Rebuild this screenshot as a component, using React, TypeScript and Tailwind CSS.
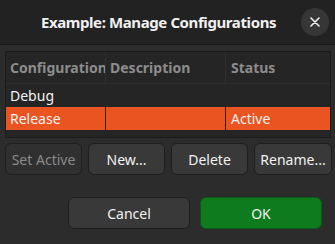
const rows = [
  { name: "Debug", desc: "", status: "", active: false },
  { name: "Release", desc: "", status: "Active", active: true },
];

const font = { fontFamily: '"Noto Sans", "DejaVu Sans", sans-serif' };

export default function App() {
  return (
    <div className="h-[244px] w-[335px] overflow-hidden bg-[#2c2c2c] text-[14px] text-[#f2f2f2]" style={font}>
      {/* Title bar */}
      <div className="relative flex h-[45px] items-center justify-center border-b border-[#1a1a1a] bg-[#222222] pr-[18px]">
        <span className="text-[15px] font-bold tracking-[-0.4px] text-[#f0f0f0]">Example: Manage Configurations</span>
        <div className="absolute right-[6px] top-[8px] flex h-[28px] w-[28px] items-center justify-center rounded-full bg-[#363636]">
          <svg width="10" height="10" viewBox="0 0 10 10">
            <path d="M1 1 L9 9 M9 1 L1 9" stroke="#f0f0f0" strokeWidth="1.6" strokeLinecap="round" />
          </svg>
        </div>
      </div>

      {/* Table */}
      <div className="ml-[5px] mt-[6px] h-[87px] w-[326px] border border-[#1b1b1b] bg-[#252525]">
        <div className="flex h-[32px] items-center border-b border-[#2e2e2e] font-bold text-[#8c8c8c]">
          <div className="w-[100px] overflow-hidden whitespace-nowrap border-r border-[#2f2f2f] pl-[4px] leading-[32px]">Configuration</div>
          <div className="w-[120px] border-r border-[#2f2f2f] pl-[4px] leading-[32px]">Description</div>
          <div className="flex-1 pl-[5px] leading-[32px]">Status</div>
        </div>
        {rows.map((r) => (
          <div key={r.name} className={`flex h-[23px] items-center ${r.active ? "bg-[#e95420]" : ""}`}>
            <div className={`h-full w-[100px] pl-[4px] leading-[23px] ${r.active ? "border-r border-[#3a1a0c]" : ""}`}>{r.name}</div>
            <div className={`h-full w-[120px] pl-[4px] leading-[23px] ${r.active ? "border-r border-[#3a1a0c]" : ""}`}>{r.desc}</div>
            <div className="h-full flex-1 pl-[5px] leading-[23px]">{r.status}</div>
          </div>
        ))}
      </div>

      {/* Action buttons */}
      <div className="ml-[5px] mt-[5px] flex gap-[6px]">
        <button className="h-[32px] w-[77px] rounded-[6px] border border-[#1e1e1e] bg-[#303030] text-[#8a8a8a]">Set Active</button>
        <button className="h-[32px] w-[77px] rounded-[6px] border border-[#1e1e1e] bg-[#393939]">New...</button>
        <button className="h-[32px] w-[77px] rounded-[6px] border border-[#1e1e1e] bg-[#393939]">Delete</button>
        <button className="h-[32px] w-[78px] rounded-[6px] border border-[#1e1e1e] bg-[#393939]">Rename...</button>
      </div>

      {/* Dialog buttons */}
      <div className="mr-[13px] mt-[22px] flex justify-end gap-[10px]">
        <button className="h-[32px] w-[122px] rounded-[6px] border border-[#1e1e1e] bg-[#393939]">Cancel</button>
        <button className="h-[32px] w-[122px] rounded-[6px] border border-[#0a5a16] bg-[#0e7b1f]">OK</button>
      </div>
    </div>
  );
}
